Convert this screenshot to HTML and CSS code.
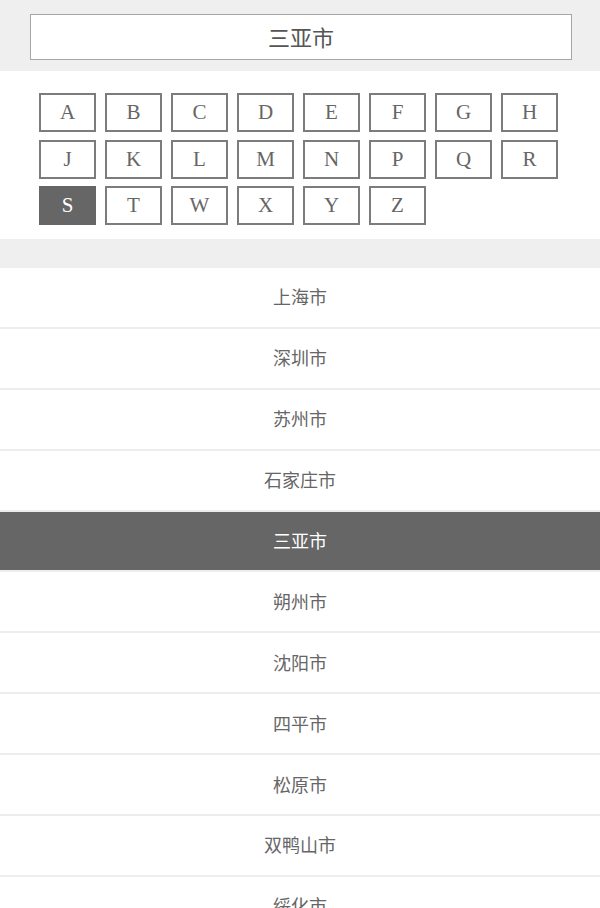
FILE: index.html
```html
<!DOCTYPE html>
<html lang="zh-CN">
<head>
<meta charset="utf-8">
<title>选择城市</title>
<link rel="stylesheet" href="styles.css">
</head>
<body>
<div class="header">
  <div class="search">三亚市</div>
</div>
<div class="letters">
  <div class="grid">
    <span class="key">A</span><span class="key">B</span><span class="key">C</span><span class="key">D</span>
    <span class="key">E</span><span class="key">F</span><span class="key">G</span><span class="key">H</span>
    <span class="key">J</span><span class="key">K</span><span class="key">L</span><span class="key">M</span>
    <span class="key">N</span><span class="key">P</span><span class="key">Q</span><span class="key">R</span>
    <span class="key active">S</span><span class="key">T</span><span class="key">W</span><span class="key">X</span>
    <span class="key">Y</span><span class="key">Z</span>
  </div>
</div>
<div class="spacer"></div>
<ul class="cities">
  <li class="city">上海市</li>
  <li class="city">深圳市</li>
  <li class="city">苏州市</li>
  <li class="city">石家庄市</li>
  <li class="city selected">三亚市</li>
  <li class="city">朔州市</li>
  <li class="city">沈阳市</li>
  <li class="city">四平市</li>
  <li class="city">松原市</li>
  <li class="city">双鸭山市</li>
  <li class="city">绥化市</li>
</ul>
</body>
</html>
```
FILE: styles.css
```css
html, body {
  margin: 0;
  padding: 0;
  background: #ffffff;
  font-family: "Noto Sans CJK SC", "Noto Sans", sans-serif;
  color: #666666;
}
.header {
  background: #efefef;
  padding: 14px 28px 11px 30px;
}
.search {
  box-sizing: border-box;
  height: 46px;
  padding-bottom: 3px;
  border: 1px solid #a6a6a6;
  background: #ffffff;
  display: flex;
  align-items: center;
  justify-content: center;
  font-size: 22px;
  color: #555555;
}
.letters {
  padding: 22px 0 14px 39px;
}
.grid {
  display: grid;
  grid-template-columns: repeat(8, 57px);
  grid-auto-rows: 39px;
  column-gap: 9px;
  row-gap: 7.5px;
}
.key {
  box-sizing: border-box;
  border: 2px solid #7c7c7c;
  display: flex;
  align-items: center;
  justify-content: center;
  font-family: "Liberation Serif", "Times New Roman", serif;
  font-size: 21px;
  color: #666666;
}
.key.active {
  background: #666666;
  border-color: #666666;
  color: #ffffff;
}
.spacer {
  height: 29px;
  background: #efefef;
}
.cities {
  list-style: none;
  margin: 0;
  padding: 0;
}
.city {
  box-sizing: border-box;
  height: 60.9px;
  padding-bottom: 2px;
  border-bottom: 2px solid #ededed;
  display: flex;
  align-items: center;
  justify-content: center;
  font-size: 18px;
  color: #666666;
}
.city.selected {
  background: #666666;
  color: #ffffff;
}
```
